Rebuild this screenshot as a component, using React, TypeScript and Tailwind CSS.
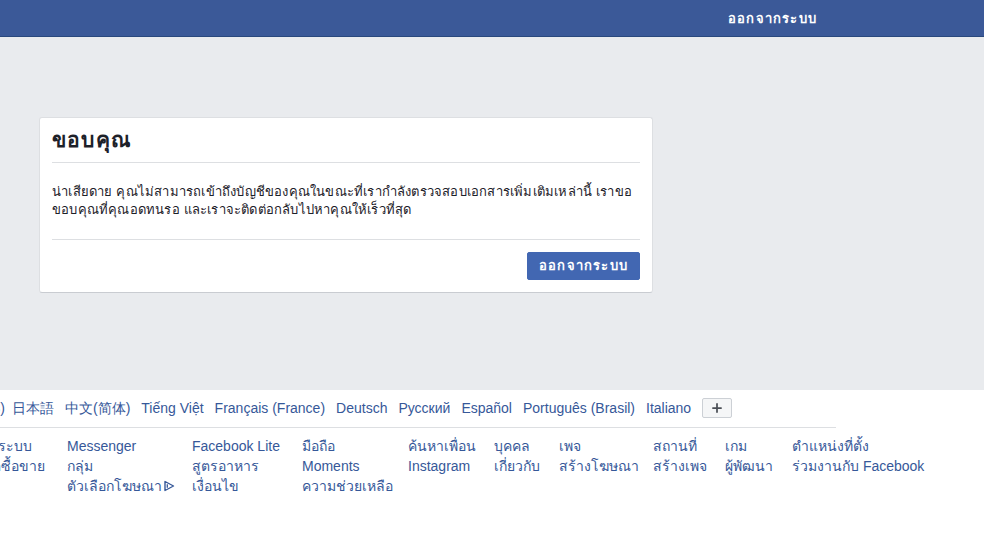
import { Plus } from "lucide-react"

const languages = [
  "ภาษาไทย",
  "English (US)",
  "日本語",
  "中文(简体)",
  "Tiếng Việt",
  "Français (France)",
  "Deutsch",
  "Русский",
  "Español",
  "Português (Brasil)",
  "Italiano",
]

// footer link columns, left to right (first two start off-screen)
const linkColumns: { width: string; links: string[] }[] = [
  { width: "w-[110px]", links: ["สมัครใช้งาน", "คุกกี้"] },
  { width: "w-[101px]", links: ["เข้าสู่ระบบ", "ตลาดซื้อขาย"] },
  { width: "w-[125px]", links: ["Messenger", "กลุ่ม", "ตัวเลือกโฆษณา"] },
  { width: "w-[110px]", links: ["Facebook Lite", "สูตรอาหาร", "เงื่อนไข"] },
  { width: "w-[106px]", links: ["มือถือ", "Moments", "ความช่วยเหลือ"] },
  { width: "w-[86px]", links: ["ค้นหาเพื่อน", "Instagram"] },
  { width: "w-[65px]", links: ["บุคคล", "เกี่ยวกับ"] },
  { width: "w-[94px]", links: ["เพจ", "สร้างโฆษณา"] },
  { width: "w-[72px]", links: ["สถานที่", "สร้างเพจ"] },
  { width: "w-[67px]", links: ["เกม", "ผู้พัฒนา"] },
  { width: "w-[150px]", links: ["ตำแหน่งที่ตั้ง", "ร่วมงานกับ Facebook"] },
]

function AdChoicesIcon() {
  return (
    <svg width="12" height="12" viewBox="0 0 12 12" className="inline-block ml-[1px] -mt-[2px]">
      <path d="M2 1.5 L2 10.5 L10.5 6 Z" fill="none" stroke="#365899" strokeWidth="1.4" strokeLinejoin="round" />
      <path d="M4.3 4.3 L4.3 7.7" stroke="#365899" strokeWidth="1.3" />
    </svg>
  )
}

export default function App() {
  return (
    <div
      className="min-h-[554px] w-[984px] overflow-hidden bg-white text-[#1d2129]"
      style={{ fontFamily: '"Liberation Sans", Arial, "Noto Sans", Tahoma, sans-serif' }}
    >
      {/* Blue top bar */}
      <div className="h-[37px] bg-[#3b5998] border-b border-[#29487d] flex items-center">
        <div className="ml-[728px] text-[13px] tracking-[1.2px] font-bold text-white leading-none">ออกจากระบบ</div>
      </div>

      {/* Gray content area */}
      <div className="bg-[#e9ebee] h-[353px] pt-[80px] pl-[39px]">
        <div className="w-[614px] bg-white border border-[#dddfe2] border-b-[#c9ccd1] rounded-[3px] px-3">
          <div className="py-3 border-b border-[#dddfe2]">
            <h2 className="text-[21px] tracking-[1.2px] leading-[20px] font-bold text-[#1d2129]">ขอบคุณ</h2>
          </div>
          <div className="py-5 border-b border-[#dddfe2] text-[13px] tracking-[0.2px] leading-[18px]">
            น่าเสียดาย คุณไม่สามารถเข้าถึงบัญชีของคุณในขณะที่เรากำลังตรวจสอบเอกสารเพิ่มเติมเหล่านี้ เราขอ
            <br />
            ขอบคุณที่คุณอดทนรอ และเราจะติดต่อกลับไปหาคุณให้เร็วที่สุด
          </div>
          <div className="py-3 flex justify-end">
            <button className="h-[28px] px-[11px] bg-[#4267b2] border border-[#4267b2] rounded-[2px] text-white text-[13px] tracking-[1.2px] font-bold">
              ออกจากระบบ
            </button>
          </div>
        </div>
      </div>

      {/* Footer */}
      <div className="pt-[8px]">
        <div className="w-[980px] -ml-[144px]">
          <div className="flex items-center border-b border-[#dddfe2] pb-[9px] text-[14px] leading-[18px] text-[#365899]">
            <div className="w-[149px] flex justify-end gap-[11px] whitespace-nowrap">
              <span className="text-[#90949c]">{languages[0]}</span>
              <a>{languages[1]}</a>
            </div>
            <div className="flex gap-[11px] ml-[7px] whitespace-nowrap">
              {languages.slice(2).map((l) => (
                <a key={l}>{l}</a>
              ))}
            </div>
            <button className="ml-[11px] w-[30px] h-[20px] flex items-center justify-center bg-[#f5f6f7] border border-[#ccd0d5] rounded-[2px]">
              <Plus size={14} strokeWidth={3} color="#4b4f56" />
            </button>
          </div>
          <div className="flex pt-[8px] text-[14px] leading-[20px] text-[#365899]">
            {linkColumns.map((col, i) => (
              <div key={i} className={`${col.width} shrink-0 flex flex-col whitespace-nowrap`}>
                {col.links.map((l) => (
                  <a key={l}>
                    {l}
                    {l === "ตัวเลือกโฆษณา" && <AdChoicesIcon />}
                  </a>
                ))}
              </div>
            ))}
          </div>
        </div>
      </div>
    </div>
  )
}
